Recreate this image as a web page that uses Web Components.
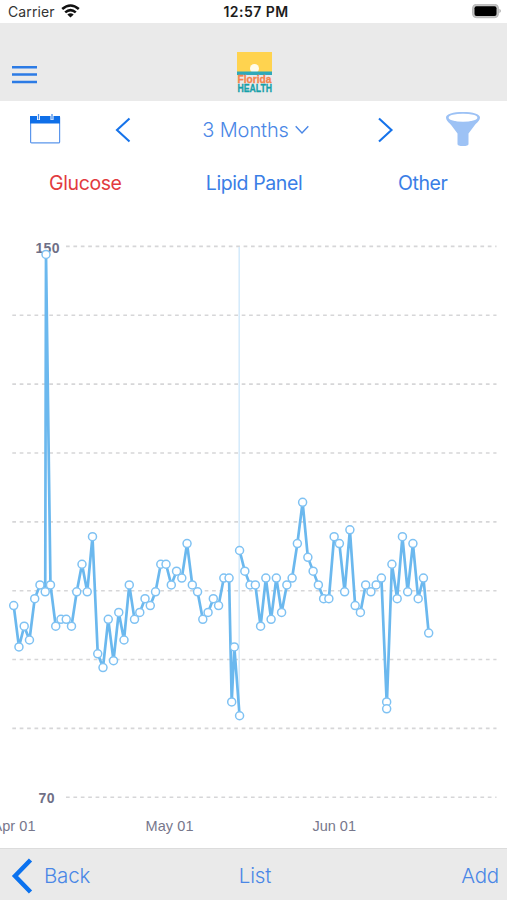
<!DOCTYPE html>
<html lang="en">
<head>
<meta charset="utf-8">
<title>Glucose</title>
<style>
  body {
    margin: 0;
    background: #fff;
    font-family: Inter, "Liberation Sans", sans-serif;
    --blue: #1673ea;
    --text-blue: #4a87e6;
    --bar: #eaeaea;
  }
</style>
</head>
<body>
<health-app></health-app>

<script>
class StatusBar extends HTMLElement {
  constructor() {
    super();
    this.attachShadow({ mode: "open" }).innerHTML = `
      <style>
        :host {
          display: grid;
          grid-template-columns: 1fr auto 1fr;
          align-items: center;
          height: 23px;
          box-sizing: border-box;
          padding: 0 5px 0 8px;
          font-size: 14px;
          color: #333;
        }
        .carrier { display: flex; align-items: center; gap: 6px; letter-spacing: 0.1px; }
        .time { font-weight: 600; color: #1c1c1c; letter-spacing: 0.45px; margin-right: -2px; }
        .battery { justify-self: end; }
        svg { display: block; }
        .carrier svg { margin-bottom: 2px; }
      </style>
      <div class="carrier">
        <span>Carrier</span>
        <svg width="19" height="14" viewBox="0 0 19 14" fill="none" stroke="#111" stroke-width="2.6">
          <path d="M1.2 5.1Q9.5-2.1 17.8 5.1"/>
          <path d="M4.2 8.4Q9.5 3.7 14.8 8.4"/>
          <path d="M9.5 13.6L6.3 10.5Q9.5 8 12.7 10.5Z" fill="#111" stroke="none"/>
        </svg>
      </div>
      <div class="time">12:57 PM</div>
      <svg class="battery" width="31" height="16" viewBox="0 0 31 16">
        <rect x="1.5" y=".3" width="26" height="13.4" rx="4" fill="#c4c4c4" stroke="#b9b9b9" stroke-width="1"/>
        <rect x="3.5" y="2.3" width="22" height="9.6" rx="2" fill="#000"/>
        <path d="M28.5 4.8Q31 7 28.5 9.2Z" fill="#999"/>
      </svg>`;
  }
}
customElements.define("status-bar", StatusBar);

class AppHeader extends HTMLElement {
  constructor() {
    super();
    this.attachShadow({ mode: "open" }).innerHTML = `
      <style>
        :host {
          display: grid;
          grid-template-columns: 1fr auto 1fr;
          align-items: end;
          height: 78px;
          box-sizing: border-box;
          padding: 0 10px 8px 11px;
          background: var(--bar);
        }
        svg { display: block; }
        .menu { margin-bottom: 8px; }
        text { font-family: "Liberation Sans", sans-serif; font-weight: 700; }
      </style>
      <svg class="menu" width="27" height="20" viewBox="0 0 27 20" stroke="#2c7be5" stroke-width="2.5">
        <path d="M1 2.2H26M1 9.6H26M1 17H26"/>
      </svg>
      <svg width="37" height="42" viewBox="0 0 37 42">
        <rect x="1" y="1" width="35" height="20.5" fill="#ffd34f"/>
        <circle cx="18.5" cy="17.5" r="4.5" fill="#fffbe9"/>
        <rect x="1" y="20.5" width="35" height="3.5" fill="#2fa9b9"/>
        <text x="1.5" y="32" font-size="10.5" fill="#f5824c" stroke="#f5824c" stroke-width=".3" textLength="34" lengthAdjust="spacingAndGlyphs">Florida</text>
        <text x="1.5" y="40.5" font-size="11" fill="#16a0a9" stroke="#16a0a9" stroke-width=".3" textLength="34.5" lengthAdjust="spacingAndGlyphs">HEALTH</text>
      </svg>`;
  }
}
customElements.define("app-header", AppHeader);

class RangePicker extends HTMLElement {
  constructor() {
    super();
    this.attachShadow({ mode: "open" }).innerHTML = `
      <style>
        :host {
          display: grid;
          grid-template-columns: 90px 65px 1fr 66px 88px;
          align-items: center;
          justify-items: center;
          height: 57px;
          color: var(--text-blue);
          font-size: 20px;
          font-weight: 300;
        }
        .range { display: flex; align-items: center; gap: 6px; padding-left: 3px; letter-spacing: -0.1px; }
        .calendar, .filter { margin-bottom: 2px; }
        svg { display: block; }
      </style>
      <svg class="calendar" width="32" height="32" viewBox="0 0 32 32">
        <rect x="1.6" y="3.500" width="29" height="26.4" rx="1" fill="#fff" stroke="#5b96ec" stroke-width="1.2"/>
        <path d="M1 3H31V10.5H1Z" fill="#0f6fe8"/>
        <path d="M9.5 1V7M23 1V7" stroke="#fff" stroke-width="3"/>
        <path d="M9.5 1V6.5M23 1V6.5" stroke="#4a8fec" stroke-width="1.3"/>
      </svg>
      <svg width="16" height="26" viewBox="0 0 16 26" fill="none" stroke="#1673ea" stroke-width="2.1">
        <path d="M14.5 1.5L2 13L14.5 24.5"/>
      </svg>
      <div class="range">
        <slot></slot>
        <svg width="14" height="10" viewBox="0 0 14 10" fill="none" stroke="#4a87e6" stroke-width="1.4">
          <path d="M.7 1.2L7 8L13.3 1.2"/>
        </svg>
      </div>
      <svg width="16" height="26" viewBox="0 0 16 26" fill="none" stroke="#1673ea" stroke-width="2.1">
        <path d="M1 1.5L13.5 13L1 24.5"/>
      </svg>
      <svg class="filter" width="36" height="36" viewBox="0 0 36 36">
        <path d="M1 6.5C1 3 8 1 18 1S35 3 35 6.5C35 9.5 31.5 12 29.5 14.5L23.5 22.5V33Q23.5 35 18 35T12.5 33V22.5L6.5 14.5C4.5 12 1 9.5 1 6.5Z" fill="#9dc2f5"/>
        <ellipse cx="18" cy="6.7" rx="14.4" ry="4" fill="#fff"/>
      </svg>`;
  }
}
customElements.define("range-picker", RangePicker);

class TabBar extends HTMLElement {
  constructor() {
    super();
    this.attachShadow({ mode: "open" }).innerHTML = `
      <style>
        :host {
          display: grid;
          grid-template-columns: repeat(3, 1fr);
          justify-items: center;
          align-items: center;
          height: 50px;
          box-sizing: border-box;
          padding: 0 0 1px 1px;
          font-size: 19.5px;
          letter-spacing: -0.4px;
          color: #3a7ee6;
        }
        ::slotted([active]) { color: #e23b3f; }
      </style>
      <slot></slot>`;
  }
}
customElements.define("tab-bar", TabBar);

// y of a reading and x of a day, in page pixels
const UNIT = 6.886;
const DAY = 5.253;
const toX = day => 13.7 + day * DAY;
const toY = value => 247.5 + (150 - value) * UNIT;

// [day, value], split where the line is interrupted
const days = (start, values) => values.map((v, i) => [start + i, v]);
const readings = [
  [
    ...days(0, [98, 92, 95, 93, 99, 101, 100]),
    [6.15, 149],
    ...days(7, [101, 95, 96, 96, 95, 100, 104, 100, 108, 91, 89, 96, 90, 97, 93, 101,
      96, 97, 99, 98, 100, 104, 104, 101, 103, 102, 107, 101, 100, 96, 97, 99, 98, 102, 102]),
    [41.5, 84], [42, 92], [43, 82],
  ],
  [
    ...days(43, [106, 103, 101, 101, 95, 102, 96, 102, 97, 101, 102, 107, 113, 105, 103,
      101, 99, 99, 108, 107, 100, 109, 98, 97, 101, 100, 101, 102, 84]),
    [71, 83],
    ...days(72, [104, 99, 108, 100, 107, 99, 102, 94]),
  ],
];

class GlucoseChart extends HTMLElement {
  constructor() {
    super();
    let grid = "";
    for (let i = 0; i <= 8; i++) {
      const y = 246.4 + i * 10 * UNIT;
      const x = i % 8 === 0 ? 66 : 12.3;
      grid += `<path class="grid" d="M${x} ${y}H496.5"/>`;
    }
    let lines = "";
    let dots = "";
    for (const part of readings) {
      lines += `<polyline points="${part.map(([d, v]) => `${toX(d)},${toY(v)}`).join(" ")}"/>`;
      dots += part.map(([d, v]) => `<circle cx="${toX(d)}" cy="${toY(v)}" r="4"/>`).join("");
    }

    this.attachShadow({ mode: "open" }).innerHTML = `
      <style>
        :host { display: block; height: 640px; }
        svg { display: block; }
        .grid { stroke: #d6d6d8; stroke-width: 1.6; stroke-dasharray: 3.7 3.7; }
        polyline { fill: none; stroke: #6bb8ee; stroke-width: 2.7; stroke-linejoin: round; }
        circle { fill: #fff; stroke: #7fc2f3; stroke-width: 1.5; }
        text { fill: #77778c; font: 14.5px "Liberation Sans", sans-serif; }
        .limit { fill: #6f6f86; font-weight: 700; font-size: 14px; }
      </style>
      <svg width="507" height="640" viewBox="0 208 507 640">
        ${grid}
        <text class="limit" x="35.5" y="252.6" textLength="24">150</text>
        <text class="limit" x="38.5" y="802.6" textLength="16">70</text>
        <path d="M239.2 247V716" stroke="#d3eafb" stroke-width="1.5"/>
        ${lines}
        ${dots}
        <text x="-7.5" y="831" textLength="43">Apr 01</text>
        <text x="145.5" y="831" textLength="48">May 01</text>
        <text x="312.5" y="831" textLength="43.5">Jun 01</text>
      </svg>`;
  }
}
customElements.define("glucose-chart", GlucoseChart);

class BottomBar extends HTMLElement {
  constructor() {
    super();
    this.attachShadow({ mode: "open" }).innerHTML = `
      <style>
        :host {
          display: grid;
          grid-template-columns: 1fr auto 1fr;
          align-items: center;
          height: 52px;
          box-sizing: border-box;
          padding: 2px 8px 0 11px;
          border-top: 1px solid #dcdcdc;
          background: var(--bar);
          color: var(--text-blue);
          font-size: 20.5px;
          font-weight: 300;
          letter-spacing: -0.2px;
        }
        .back { display: flex; align-items: center; gap: 11px; }
        .add { justify-self: end; }
        svg { display: block; }
      </style>
      <div class="back">
        <svg width="22" height="36" viewBox="0 0 22 36" fill="none" stroke="#0b72ef" stroke-width="4.5">
          <path d="M19.5 2L4 18L19.5 34"/>
        </svg>
        <slot name="back"></slot>
      </div>
      <slot></slot>
      <div class="add"><slot name="add"></slot></div>`;
  }
}
customElements.define("bottom-bar", BottomBar);

class HealthApp extends HTMLElement {
  constructor() {
    super();
    this.attachShadow({ mode: "open" }).innerHTML = `
      <style>
        :host { display: flex; flex-direction: column; width: 507px; height: 900px; overflow: hidden; }
      </style>
      <status-bar></status-bar>
      <app-header></app-header>
      <range-picker>3 Months</range-picker>
      <tab-bar>
        <span active>Glucose</span>
        <span>Lipid Panel</span>
        <span>Other</span>
      </tab-bar>
      <glucose-chart></glucose-chart>
      <bottom-bar>
        <span slot="back">Back</span>
        <span>List</span>
        <span slot="add">Add</span>
      </bottom-bar>`;
  }
}
customElements.define("health-app", HealthApp);
</script>
</body>
</html>
